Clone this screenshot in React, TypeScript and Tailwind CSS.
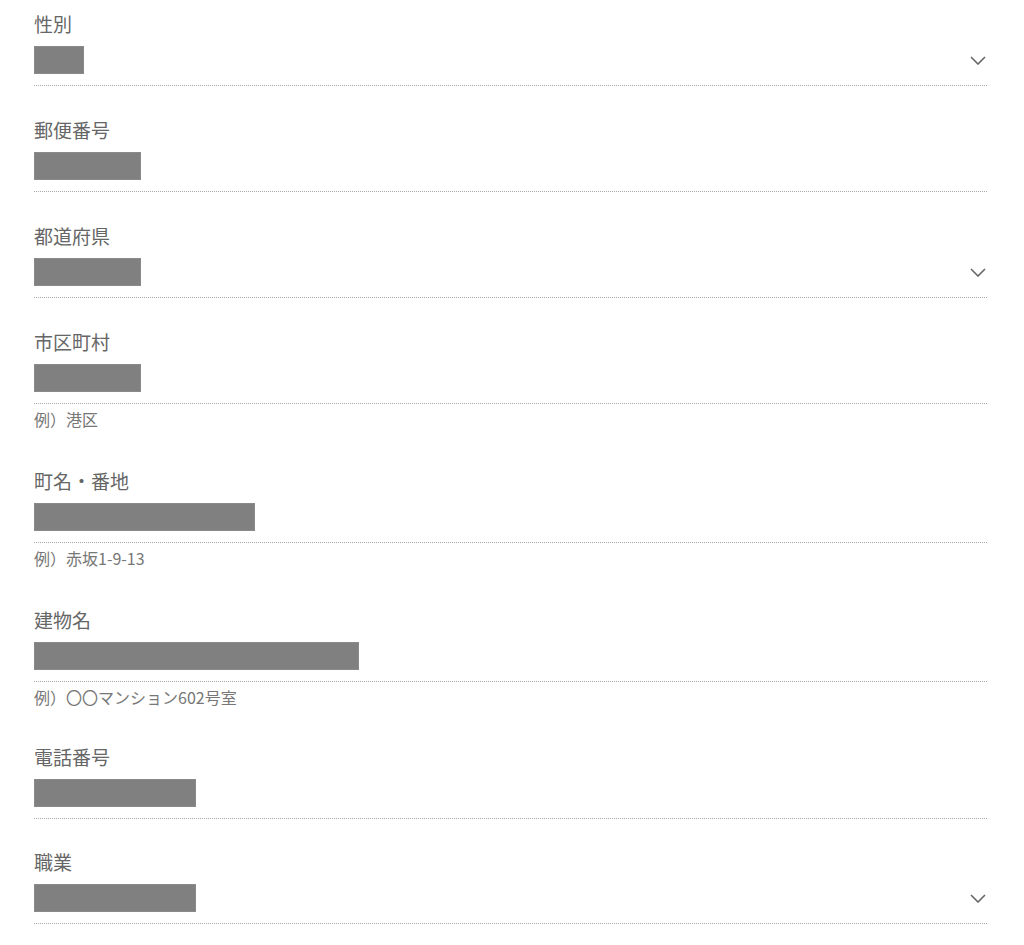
type Field = {
  label: string;
  width: number;
  select?: boolean;
  hint?: string;
};

const FIELDS: Field[] = [
  { label: "性別", width: 50, select: true },
  { label: "郵便番号", width: 107 },
  { label: "都道府県", width: 107, select: true },
  { label: "市区町村", width: 107, hint: "例）港区" },
  { label: "町名・番地", width: 221, hint: "例）赤坂1-9-13" },
  { label: "建物名", width: 325, hint: "例）〇〇マンション602号室" },
  { label: "電話番号", width: 162 },
  { label: "職業", width: 162, select: true },
];

function Chevron() {
  return (
    <svg width="16" height="9" viewBox="0 0 16 9" fill="none" className="mr-[1px]">
      <polyline points="1,1 8,8 15,1" stroke="#666" strokeWidth="1.6" />
    </svg>
  );
}

export default function App() {
  return (
    <main
      className="min-h-[945px] bg-white pt-[12px]"
      style={{ fontFamily: '"Noto Sans CJK JP", "Noto Sans", sans-serif' }}
    >
      <div className="ml-[34px] w-[953px]">
        {FIELDS.map((f, i) => (
          <div key={f.label} className={i === 0 ? "" : i > 5 ? "pt-[31px]" : "pt-[32px]"}>
            <div className="text-[19px] leading-[24px] text-[#666]">{f.label}</div>
            <div className="mt-[10px] flex items-center justify-between border-b border-dotted border-[#aaa] pb-[11px]">
              <div
                className="h-[28px] border border-[#8a8a8a] bg-[#808080]"
                style={{ width: f.width }}
              />
              {f.select && <Chevron />}
            </div>
            {f.hint && (
              <div className={`pt-[4px] text-[16px] leading-[22px] text-[#777] ${i === 5 ? "pb-[6px]" : "pb-[7px]"}`}>
                {f.hint}
              </div>
            )}
          </div>
        ))}
      </div>
    </main>
  );
}
